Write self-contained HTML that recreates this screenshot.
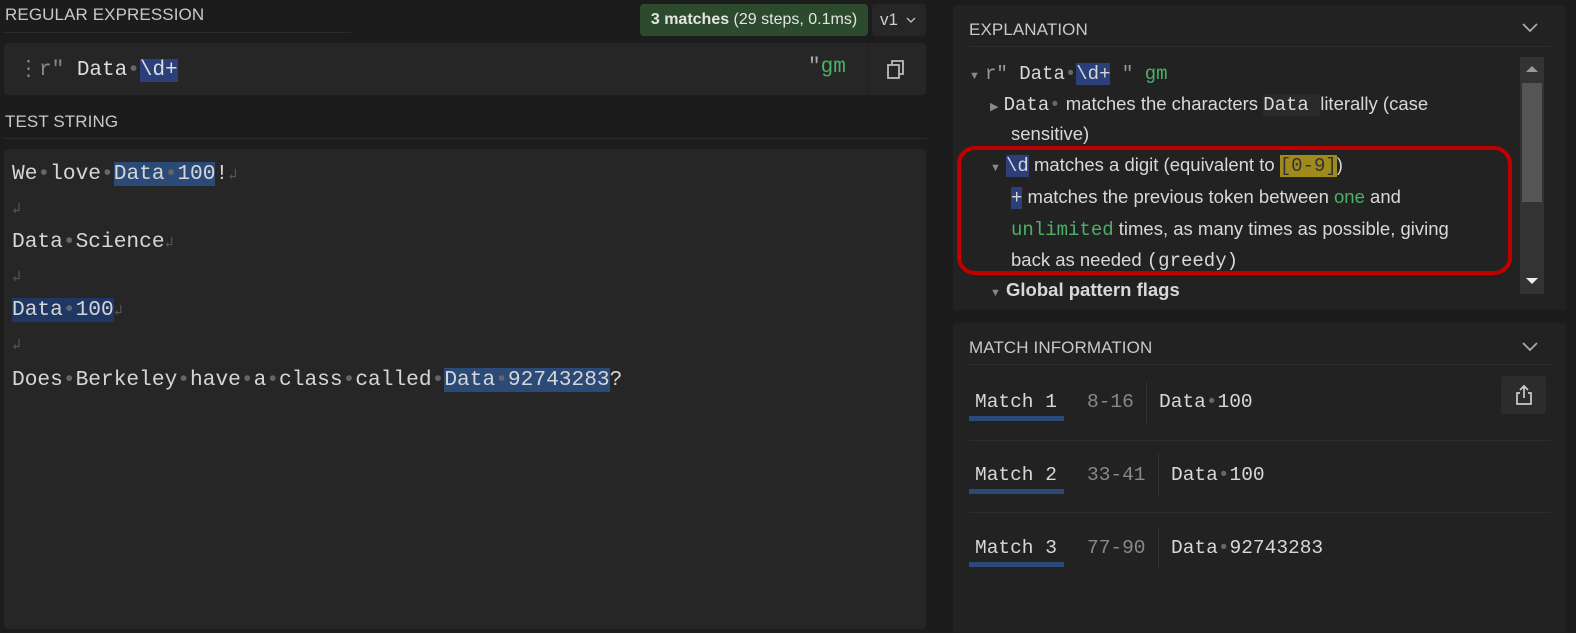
<!DOCTYPE html>
<html><head><meta charset="utf-8"><style>
*{margin:0;padding:0;box-sizing:border-box}
body{width:1576px;height:627px;background:#1c1c1c;position:relative;overflow:hidden;font-family:"Liberation Sans",sans-serif;color:#d8d8d8}
.a{position:absolute}
.mono{font-family:"Liberation Mono","DejaVu Sans Mono",monospace}
.h{font-size:17px;color:#c8c8c8;letter-spacing:0.1px}
.hl{background:#2b4a78}
.d{color:#666}
.ts{font-size:21.2px;white-space:pre;color:#d6d6d6}
.ts div{height:34px;line-height:34px;overflow:visible}
.ret{color:#555;font-size:15px;line-height:0}
.exp{font-size:18.5px;white-space:nowrap;line-height:31px}
.g{color:#4caf6a}
.mn{font-size:19.5px}
</style></head><body>
<!-- left -->
<div class="a h" style="left:5px;top:5px;">REGULAR EXPRESSION</div>
<div class="a" style="left:3px;top:32px;width:348px;height:1px;background:#2a2a2a"></div>
<div class="a" style="left:640px;top:4px;width:228px;height:32px;background:#2c4a2e;border-radius:4px;font-size:16px;line-height:32px;text-align:center;color:#e4e4e4"><b>3 matches</b> (29 steps, 0.1ms)</div>
<div class="a" style="left:872px;top:4px;width:54px;height:32px;background:#262626;border-radius:4px;font-size:17px;line-height:32px;color:#ccc;padding-left:8px">v1</div>
<svg class="a" style="left:906px;top:17px" width="10" height="7" viewBox="0 0 10 7"><path d="M1 1l4 4 4-4" fill="none" stroke="#bbb" stroke-width="1.4"/></svg>
<div class="a" style="left:4px;top:43px;width:922px;height:52px;background:#262626;border-radius:4px"></div>
<div class="a" style="left:867px;top:43px;width:1px;height:52px;background:#1e1e1e"></div>
<div class="a mono" style="left:18px;top:56px;font-size:21px;color:#ddd;white-space:pre"><span style="color:#888">&#8942;r"</span> Data<span class="d">&#8226;</span><span class="hl" style="background:#2b3f7a">\d+</span></div>
<div class="a mono" style="left:808px;top:56px;font-size:21px;color:#aaa">"<span class="g">gm</span></div>
<svg class="a" style="left:886px;top:59px" width="20" height="22" viewBox="0 0 20 22"><rect x="2" y="6" width="11" height="13" fill="none" stroke="#bbb" stroke-width="1.8"/><path d="M6 6V2h11v13h-4" fill="none" stroke="#bbb" stroke-width="1.8"/></svg>
<div class="a h" style="left:5px;top:112px;">TEST STRING</div>
<div class="a" style="left:3px;top:138px;width:924px;height:1px;background:#2a2a2a"></div>
<div class="a" style="left:4px;top:149px;width:922px;height:480px;background:#262626;border-radius:4px"></div>
<div class="a mono ts" style="left:12px;top:157px"><div>We<span class="d">&#8226;</span>love<span class="d">&#8226;</span><span class="hl">Data<span class="d">&#8226;</span>100</span>!<span class="ret">&#8626;</span></div><div><span class="ret">&#8626;</span></div><div>Data<span class="d">&#8226;</span>Science<span class="ret">&#8626;</span></div><div><span class="ret">&#8626;</span></div><div><span class="hl" style="background:#1f3763">Data<span class="d">&#8226;</span>100</span><span class="ret">&#8626;</span></div><div><span class="ret">&#8626;</span></div><div style="margin-top:2px">Does<span class="d">&#8226;</span>Berkeley<span class="d">&#8226;</span>have<span class="d">&#8226;</span>a<span class="d">&#8226;</span>class<span class="d">&#8226;</span>called<span class="d">&#8226;</span><span class="hl">Data<span class="d">&#8226;</span>92743283</span>?</div></div>
<!-- right: explanation -->
<div class="a" style="left:953px;top:5px;width:613px;height:305px;background:#222;border-radius:4px"></div>
<div class="a h" style="left:969px;top:20px;">EXPLANATION</div>
<svg class="a" style="left:1522px;top:23px" width="16" height="10" viewBox="0 0 16 10"><path d="M1 1l7 7 7-7" fill="none" stroke="#aaa" stroke-width="1.8"/></svg>
<div class="a" style="left:969px;top:46px;width:582px;height:1px;background:#2d2d2d"></div>
<div class="a" style="left:1520px;top:57px;width:24px;height:237px;background:#333"></div>
<div class="a" style="left:1522px;top:83px;width:20px;height:119px;background:#555"></div>
<div class="a" style="left:1526px;top:66px;width:0;height:0;border-left:6px solid transparent;border-right:6px solid transparent;border-bottom:6px solid #999"></div>
<div class="a" style="left:1526px;top:278px;width:0;height:0;border-left:6px solid transparent;border-right:6px solid transparent;border-top:6px solid #eee"></div>
<div class="a" style="left:953px;top:57px;width:565px;height:250px;overflow:hidden">
<div class="a exp" style="left:16px;top:0"><span style="font-size:11px;color:#888">&#9660;</span> <span class="mono" style="font-size:19px"><span style="color:#999">r"</span> Data<span class="d">&#8226;</span><span class="hl" style="background:#2b3f7a">\d+</span> <span style="color:#999">"</span> <span class="g">gm</span></span></div>
<div class="a exp" style="left:37px;top:31px"><span style="font-size:11px;color:#888">&#9654;</span> <span class="mono" style="font-size:19px">Data<span class="d">&#8226;</span></span> matches the characters <span class="mono" style="font-size:19px;background:#2a2a2a">Data </span> literally (case</div>
<div class="a exp" style="left:58px;top:61px">sensitive)</div>
<div class="a exp" style="left:37px;top:92px"><span style="font-size:11px;color:#888">&#9660;</span> <span class="mono hl" style="font-size:19px;background:#2b3f7a">\d</span> matches a digit (equivalent to <span class="mono" style="font-size:19px;background:#a08a1c;color:#333">[0-9]</span>)</div>
<div class="a exp" style="left:58px;top:124px"><span class="mono" style="font-size:19px;background:#2b3f7a">+</span> matches the previous token between <span class="g">one</span> and</div>
<div class="a exp" style="left:58px;top:156px"><span class="mono g" style="font-size:19px">unlimited</span> times, as many times as possible, giving</div>
<div class="a exp" style="left:58px;top:187px">back as needed <span class="mono" style="font-size:19px">(greedy)</span></div>
<div class="a exp" style="left:37px;top:217px;font-weight:bold"><span style="font-size:11px;color:#888">&#9660;</span> Global pattern flags</div>
</div>
<div class="a" style="left:957px;top:146px;width:555px;height:129px;border:4px solid #c00000;border-radius:18px"></div>
<!-- match info -->
<div class="a" style="left:953px;top:323px;width:613px;height:310px;background:#222;border-radius:4px"></div>
<div class="a h" style="left:969px;top:338px;">MATCH INFORMATION</div>
<svg class="a" style="left:1522px;top:342px" width="16" height="10" viewBox="0 0 16 10"><path d="M1 1l7 7 7-7" fill="none" stroke="#aaa" stroke-width="1.8"/></svg>
<div class="a" style="left:969px;top:364px;width:582px;height:1px;background:#2d2d2d"></div>
<div class="a" style="left:1501px;top:376px;width:45px;height:38px;background:#2c2c2c;border-radius:3px"></div>
<svg class="a" style="left:1514px;top:384px" width="20" height="22" viewBox="0 0 20 22"><path d="M10 14V2M6 6l4-4 4 4M6 9H3v11h14V9h-3" fill="none" stroke="#ccc" stroke-width="1.7"/></svg>

<div class="a mono mn" style="left:975px;top:391px">Match 1</div>
<div class="a" style="left:969px;top:416px;width:95px;height:5px;background:#2b4a78"></div>
<div class="a mono mn" style="left:1087px;top:391px;color:#888">8-16</div>
<div class="a" style="left:1146px;top:382px;width:1px;height:42px;background:#333"></div>
<div class="a mono mn" style="left:1159px;top:391px">Data<span class="d">&#8226;</span>100</div>
<div class="a" style="left:969px;top:440px;width:582px;height:1px;background:#2d2d2d"></div>

<div class="a mono mn" style="left:975px;top:464px">Match 2</div>
<div class="a" style="left:969px;top:489px;width:95px;height:5px;background:#2b4a78"></div>
<div class="a mono mn" style="left:1087px;top:464px;color:#888">33-41</div>
<div class="a" style="left:1158px;top:454px;width:1px;height:42px;background:#333"></div>
<div class="a mono mn" style="left:1171px;top:464px">Data<span class="d">&#8226;</span>100</div>
<div class="a" style="left:969px;top:512px;width:582px;height:1px;background:#2d2d2d"></div>

<div class="a mono mn" style="left:975px;top:537px">Match 3</div>
<div class="a" style="left:969px;top:562px;width:95px;height:5px;background:#2b4a78"></div>
<div class="a mono mn" style="left:1087px;top:537px;color:#888">77-90</div>
<div class="a" style="left:1158px;top:527px;width:1px;height:42px;background:#333"></div>
<div class="a mono mn" style="left:1171px;top:537px">Data<span class="d">&#8226;</span>92743283</div>
</body></html>
